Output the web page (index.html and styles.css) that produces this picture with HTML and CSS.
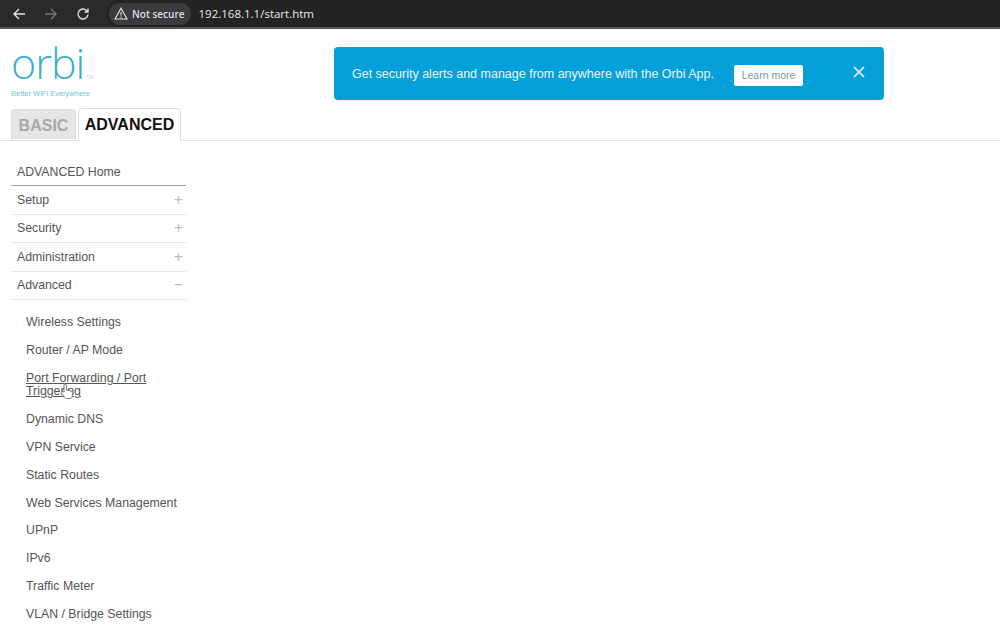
FILE: index.html
```html
<!DOCTYPE html>
<html lang="en">
<head>
    <meta charset="UTF-8">
    <title>192.168.1.1/start.htm</title>
    <link rel="stylesheet" href="styles.css">
</head>
<body>
    <div class="browser-bar">
        <svg class="nav-icon" width="14" height="14" viewBox="0 0 14 14"><path d="M13 7H2M7 2L2 7l5 5" fill="none" stroke="#e4e4e4" stroke-width="1.4"/></svg>
        <svg class="nav-icon" width="14" height="14" viewBox="0 0 14 14"><path d="M1 7h11M7 2l5 5-5 5" fill="none" stroke="#777" stroke-width="1.4"/></svg>
        <svg class="nav-icon" width="14" height="14" viewBox="0 0 14 14"><path d="M12 7.5A5 5 0 1 1 10.5 3.4L12 5M12 1.5V5H8.5" fill="none" stroke="#dcdcdc" stroke-width="1.4"/></svg>
        <div class="address">
            <div class="not-secure">
                <svg width="14" height="13" viewBox="0 0 14 13"><path d="M7 1.2L13 12H1zM7 5v3.6M7 9.6v1.1" fill="none" stroke="#e4e4e4" stroke-width="1.1"/></svg>
                <span>Not secure</span>
            </div>
            <span class="url">192.168.1.1/start.htm</span>
        </div>
    </div>

    <div class="top">
        <div class="logo">
            <div class="logo-word">orbi<span class="tm">TM</span></div>
            <div class="tagline">Better WiFi Everywhere</div>
        </div>
        <div class="banner">
            <span class="banner-text">Get security alerts and manage from anywhere with the Orbi App.</span>
            <button class="learn">Learn more</button>
            <svg class="banner-close" width="12" height="12" viewBox="0 0 12 12"><path d="M1 1l10 10M11 1L1 11" stroke="#e8f6fc" stroke-width="1.7"/></svg>
        </div>
    </div>

    <div class="tabs">
        <div class="tab tab-off">BASIC</div>
        <div class="tab tab-on">ADVANCED</div>
    </div>

    <div class="menu">
        <div class="menu-row menu-home">ADVANCED Home</div>
        <div class="menu-row">Setup <span class="sign">+</span></div>
        <div class="menu-row">Security <span class="sign">+</span></div>
        <div class="menu-row">Administration <span class="sign">+</span></div>
        <div class="menu-row">Advanced <span class="sign">&minus;</span></div>
        <ul class="submenu">
            <li>Wireless Settings</li>
            <li>Router / AP Mode</li>
            <li class="hovered"><span>Port Forwarding / Port Triggering</span>
                <svg class="cursor" width="14" height="18" viewBox="0 0 14 18"><path d="M4 9V2.2a1.2 1.2 0 0 1 2.4 0V7l5 1.2c1 .3 1.4 1 1.3 2l-.6 3.6c-.2 1-.9 1.7-2 1.7H6.500c-.7 0-1.300-.3-1.700-.9L1.300 10c-.6-1 .6-2.100 1.600-1.300z" fill="#fff" stroke="#777" stroke-width="1"/></svg>
            </li>
            <li>Dynamic DNS</li>
            <li>VPN Service</li>
            <li>Static Routes</li>
            <li>Web Services Management</li>
            <li>UPnP</li>
            <li>IPv6</li>
            <li>Traffic Meter</li>
            <li>VLAN / Bridge Settings</li>
        </ul>
    </div>
</body>
</html>
```

FILE: styles.css
```css
html, body {
    height: 100%;
}
body {
    margin: 0;
    background-color: white;
    font-family: "Liberation Sans", Arial, sans-serif;
    overflow: hidden;
}
.browser-bar {
    display: flex;
    align-items: center;
    height: 27px;
    padding-left: 12px;
    background-color: #2a2a2b;
    border-bottom: 2px solid #555;
}
.nav-icon {
    margin-right: 18px;
    flex: none;
}
.address {
    display: flex;
    align-items: center;
    height: 27px;
    margin-left: -2px;
    padding-left: 3px;
    flex: 1;
    background-color: #232324;
    border-radius: 14px 0 0 14px;
}
.not-secure {
    display: flex;
    align-items: center;
    gap: 4px;
    height: 22px;
    padding: 0 6px 0 5px;
    background-color: #3a3b3d;
    border-radius: 11px;
    color: #dedede;
    font-family: "Open Sans", sans-serif;
    font-size: 10px;
    font-weight: 600;
}
.url {
    margin-left: 8px;
    color: #e6e6e6;
    font-family: "Open Sans", sans-serif;
    font-size: 11.5px;
}
.top {
    display: flex;
    height: 78px;
}
.logo {
    width: 334px;
    padding-left: 11px;
    box-sizing: border-box;
}
.logo-word {
    height: 50px;
    margin-top: 9px;
    color: #3cb0cb;
    font-family: "Open Sans", sans-serif;
    font-size: 43px;
    font-weight: 300;
    line-height: 50px;
    letter-spacing: -1px;
}
.tm {
    margin-left: 2px;
    color: #9ab;
    font-size: 5px;
    letter-spacing: 0;
}
.tagline {
    color: #6fc6dc;
    font-size: 7.5px;
    margin-top: 1px;
}
.banner {
    display: flex;
    align-items: center;
    width: 550px;
    height: 53px;
    margin-top: 18px;
    padding-left: 18px;
    box-sizing: border-box;
    background-color: #06a0d8;
    border-radius: 4px;
}
.banner-text {
    color: #e8f6fc;
    font-size: 12.500px;
}
.learn {
    width: 69px;
    height: 21px;
    margin-left: 20px;
    margin-top: 3px;
    padding: 0;
    background-color: white;
    border: none;
    border-radius: 2px;
    color: #7b97a6;
    font-family: "Liberation Sans", Arial, sans-serif;
    font-size: 10.500px;
}
.banner-close {
    margin-left: 50px;
    margin-top: -3px;
}
.tabs {
    display: flex;
    gap: 2px;
    height: 33px;
    padding-left: 11px;
    border-bottom: 1px solid #e3e3e3;
}
.tab {
    height: 30px;
    margin-top: 2px;
    font-size: 16px;
    font-weight: bold;
    line-height: 32px;
    text-align: center;
    border-radius: 4px 4px 0 0;
}
.tab-off {
    width: 65px;
    background-color: #e6e6e6;
    border: 1px solid #ddd;
    border-bottom: none;
    color: #a9a9a9;
    box-sizing: border-box;
}
.tab-on {
    width: 103px;
    margin-top: 1px;
    height: 33px;
    background-color: white;
    border: 1px solid #e0e0e0;
    border-bottom: none;
    color: #111;
    box-sizing: border-box;
}
.menu {
    width: 175px;
    margin: 17px 0 0 11px;
    color: #555;
    font-size: 12.300px;
}
.menu-row {
    display: flex;
    justify-content: space-between;
    align-items: center;
    height: 27.400px;
    padding: 0 3px 0 6px;
    border-bottom: 1px solid #e8e8e8;
}
.menu-home {
    border-bottom-color: #a5a5a5;
}
.sign {
    color: #bdbdbd;
    font-size: 16px;
    font-weight: 300;
}
.submenu {
    list-style: none;
    margin: 9px 0 0;
    padding: 0 0 0 15px;
}
.submenu li {
    position: relative;
    padding: 7px 0;
    line-height: 13.800px;
}
.hovered span {
    text-decoration: underline;
    text-decoration-thickness: 1px;
}
.cursor {
    position: absolute;
    left: 34px;
    top: 18px;
}
```
